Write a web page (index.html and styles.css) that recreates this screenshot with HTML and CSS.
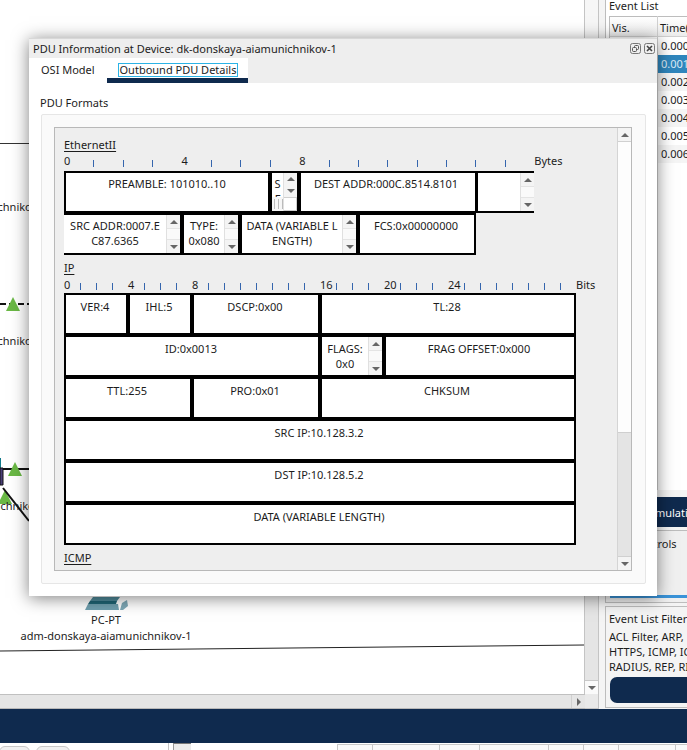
FILE: index.html
```html
<!DOCTYPE html>
<html lang="en">
<head>
<meta charset="utf-8">
<title>PDU Information at Device</title>
<link rel="stylesheet" href="styles.css">
</head>
<body>
<div class="app">
  <div class="main">
    <div class="work">
      <div class="canvas">
        <svg class="marks" width="584" height="694" viewBox="0 0 584 694">
          <path d="M0 143.5H30" stroke="#333" fill="none"/>
          <path d="M0 304H30" stroke="#111" stroke-width="2" stroke-dasharray="6 3" fill="none"/>
          <path d="M6 311L13 297L20 311Z" fill="#6ab845"/>
          <path d="M2 469H30" stroke="#111" stroke-width="2" fill="none"/>
          <path d="M0 458H1V468H0Z" fill="#117a8b"/>
          <path d="M0 468H3V485H0Z" fill="#4a3f78" stroke="#111"/>
          <path d="M8 476L15 462L22 476Z" fill="#6ab845"/>
          <path d="M-2 504L5 490L12 504Z" fill="#6ab845"/>
          <path d="M3 488L29 521" stroke="#111" stroke-width="2" fill="none"/>
          <path d="M0 651L584 645" stroke="#222" fill="none"/>
          <path d="M93 597H120L117 601H90Z" fill="#4f8a9a"/>
          <path d="M90 601H117L116 604H88Z" fill="#1f6474"/>
          <path d="M88 604H118L119 610H85Z" fill="#6f9fae"/>
          <path d="M122 603L127 600L128 606L123 610H120Z" fill="#7ea8b6"/>
        </svg>
        <span class="cut cut-a">adm-donskaya-aiamunichnikov-1</span>
        <span class="cut cut-b">adm-donskaya-aiamunichnikov-1</span>
        <span class="cut cut-c">adm-donskaya-aiamunichnikov-1</span>
        <div class="pc">
          <span>PC-PT</span>
          <span>adm-donskaya-aiamunichnikov-1</span>
        </div>
      </div>
      <div class="wscroll">
        <div class="wthumb"></div>
        <div class="wtrack"></div>
        <div class="wbtn"><b class="dn"></b></div>
      </div>
      <div class="hscroll">
        <div class="htrack"></div>
        <div class="hbtn"><b class="rt"></b></div>
      </div>
      <div class="corner"></div>
    </div>
    <aside class="side">
      <section class="p-events">
        <div class="p-title">Event List</div>
        <div class="ev-table">
          <div class="ev-vis">
            <div class="ev-head">Vis.</div>
          </div>
          <div class="ev-time">
            <div class="ev-head">Time(sec)</div>
            <div class="ev-row">0.000</div>
            <div class="ev-row ev-sel">0.001</div>
            <div class="ev-row ev-alt">0.002</div>
            <div class="ev-row">0.003</div>
            <div class="ev-row ev-alt">0.004</div>
            <div class="ev-row">0.005</div>
            <div class="ev-row ev-alt">0.006</div>
          </div>
        </div>
      </section>
      <div class="sim-btn">Simulation</div>
      <section class="p-play">
        <div class="p-title">Play Controls</div>
        <div class="play-bar"></div>
      </section>
      <section class="p-filter">
        <div class="p-title">Event List Filters</div>
        <div class="f-list">
          <div>ACL Filter, ARP,</div>
          <div>HTTPS, ICMP, ICMPv6</div>
          <div>RADIUS, REP, RIP</div>
        </div>
        <div class="f-btn"></div>
      </section>
    </aside>
  </div>
  <div class="navy"></div>
  <div class="foot">
    <div class="foot-tabs"><span class="ft ft-a"></span><span class="ft ft-b"></span></div>
    <div class="foot-grip"></div>
    <div class="foot-gap"></div>
    <div class="fh fh1"></div><div class="fh fh2"></div><div class="fh fh3"></div><div class="fh fh4"></div><div class="fh fh5"></div><div class="fh fh6"></div><div class="fh fh7"></div><div class="fh fh8"></div>
  </div>

  <div class="dialog">
    <header class="d-title">
      <span class="d-name">PDU Information at Device: dk-donskaya-aiamunichnikov-1</span>
      <svg class="d-ic" width="11" height="11" viewBox="0 0 11 11"><rect x=".5" y=".5" width="10" height="10" rx="2" fill="none" stroke="#777"/><rect x="4.5" y="2.5" width="4" height="4" rx="1" fill="none" stroke="#555"/><rect x="2.5" y="4.5" width="4" height="4" rx="1" fill="#eee" stroke="#555"/></svg>
      <svg class="d-ic" width="11" height="11" viewBox="0 0 11 11"><rect x=".5" y=".5" width="10" height="10" rx="2" fill="none" stroke="#777"/><path d="M3 3L8 8M8 3L3 8" stroke="#444" stroke-width="1.6" fill="none"/></svg>
    </header>
    <nav class="d-tabs">
      <div class="tab tab-osi">OSI Model</div>
      <div class="tab tab-out"><span class="focus">Outbound PDU Details</span></div>
    </nav>
    <div class="d-body">
      <div class="fmt-label">PDU Formats</div>
      <div class="group">
        <div class="scroll">
          <div class="view">
            <div class="h h-eth">EthernetII</div>
            <div class="ruler ruler-b">
              <span>0</span><span><i></i></span><span><i></i></span><span><i></i></span><span>4</span><span><i></i></span><span><i></i></span><span><i></i></span><span>8</span><span><i></i></span><span><i></i></span><span><i></i></span><span><i></i></span><span><i></i></span><span><i></i></span><span><i></i></span><em>Bytes</em>
            </div>
            <div class="eth">
              <div class="er er1">
                <div class="c c-pre">PREAMBLE: 101010..10</div>
                <div class="c c-sfd">
                  <div class="sfd-in">
                    <div class="sfd-t">S<br>F</div>
                    <div class="sfd-h"><u></u><u></u><u></u></div>
                  </div>
                  <div class="sb sb-sfd"><div class="sbb"><b class="up"></b></div><div class="sbb"><b class="dn"></b></div><div class="sb-corner"></div></div>
                </div>
                <div class="c c-dst">DEST ADDR:000C.8514.8101</div>
                <div class="c c-more">
                  <div class="sb-txt"></div>
                  <div class="sb"><div class="sbb"><b class="up"></b></div><div class="sbm"></div><div class="sbb"><b class="dn"></b></div></div>
                </div>
              </div>
              <div class="er er2">
                <div class="c c-src">
                  <div class="sb-txt">SRC ADDR:0007.E<br>C87.6365</div>
                  <div class="sb"><div class="sbb"><b class="up"></b></div><div class="sbm"></div><div class="sbb"><b class="dn"></b></div></div>
                </div>
                <div class="c c-typ">
                  <div class="sb-txt">TYPE:<br>0x080</div>
                  <div class="sb"><div class="sbb"><b class="up"></b></div><div class="sbm"></div><div class="sbb"><b class="dn"></b></div></div>
                </div>
                <div class="c c-dat">
                  <div class="sb-txt">DATA (VARIABLE L<br>ENGTH)</div>
                  <div class="sb"><div class="sbb"><b class="up"></b></div><div class="sbm"></div><div class="sbb"><b class="dn"></b></div></div>
                </div>
                <div class="c c-fcs">FCS:0x00000000</div>
              </div>
            </div>
            <div class="h h-ip">IP</div>
            <div class="ruler ruler-i">
              <span>0</span><span><i></i></span><span><i></i></span><span><i></i></span><span>4</span><span><i></i></span><span><i></i></span><span><i></i></span><span>8</span><span><i></i></span><span><i></i></span><span><i></i></span><span><i></i></span><span><i></i></span><span><i></i></span><span><i></i></span><span>16</span><span><i></i></span><span><i></i></span><span><i></i></span><span>20</span><span><i></i></span><span><i></i></span><span><i></i></span><span>24</span><span><i></i></span><span><i></i></span><span><i></i></span><span><i></i></span><span><i></i></span><span><i></i></span><span><i></i></span><em>Bits</em>
            </div>
            <div class="ip">
              <div class="q s1">VER:4</div>
              <div class="q s1">IHL:5</div>
              <div class="q s2">DSCP:0x00</div>
              <div class="q s4">TL:28</div>
              <div class="q s4">ID:0x0013</div>
              <div class="q s1 q-flags">
                <div class="sb-txt">FLAGS:<br>0x0</div>
                <div class="sb"><div class="sbb"><b class="up"></b></div><div class="sbm"></div><div class="sbb"><b class="dn"></b></div></div>
              </div>
              <div class="q s3">FRAG OFFSET:0x000</div>
              <div class="q s2">TTL:255</div>
              <div class="q s2">PRO:0x01</div>
              <div class="q s4">CHKSUM</div>
              <div class="q s8">SRC IP:10.128.3.2</div>
              <div class="q s8">DST IP:10.128.5.2</div>
              <div class="q s8">DATA (VARIABLE LENGTH)</div>
            </div>
            <div class="h h-icmp">ICMP</div>
          </div>
          <div class="vb">
            <div class="vbb"><b class="up"></b></div>
            <div class="vb-thumb"></div>
            <div class="vb-track"></div>
            <div class="vbb vbb-d"><b class="dn"></b></div>
          </div>
        </div>
      </div>
    </div>
  </div>
</div>
</body>
</html>
```
FILE: styles.css
```css
* { box-sizing: border-box; }
html, body { margin: 0; padding: 0; }
body { font-family: "Noto Sans", "Open Sans", sans-serif; font-size: 11px; line-height: 15px; color: #1c1c1c; background: #fff; }
.app { position: relative; width: 687px; height: 750px; overflow: hidden; display: flex; flex-direction: column; }
.main { display: flex; height: 709px; flex: none; }

/* workspace */
.work { width: 599px; flex: none; display: grid; grid-template-columns: 585px 14px; grid-template-rows: 694px 15px; }
.canvas { position: relative; background: #fff; overflow: hidden; border-right: 1px solid #c4c4c4; }
.marks { position: absolute; left: 0; top: 0; }
.cut { position: absolute; white-space: nowrap; }
.cut-a { left: -124px; top: 199px; }
.cut-b { left: -124px; top: 333px; }
.cut-c { left: -121px; top: 498px; }
.pc { position: absolute; left: 21px; top: 612px; width: 170px; display: flex; flex-direction: column; align-items: center; gap: 1px; white-space: nowrap; }
.wscroll { display: flex; flex-direction: column; border-right: 1px solid #c4c4c4; }
.wthumb { height: 100px; background: #f6f6f6; }
.wtrack { flex: 1; background: #e5e5e5; }
.wbtn { height: 14px; background: #fafafa; border-top: 1px solid #c8c8c8; display: flex; align-items: center; justify-content: center; }
.hscroll { display: flex; background: #e5e5e5; border-top: 1px solid #c0c0c0; border-bottom: 1px solid #b8b8b8; }
.htrack { flex: 1; }
.hbtn { width: 14px; border-left: 1px solid #d0d0d0; display: flex; align-items: center; justify-content: center; }
.corner { background: #e9e9e9; border: 1px solid #c4c4c4; border-left: 0; border-top: 0; }

/* arrows */
.up, .dn, .rt { display: block; width: 0; height: 0; }
.up { border-left: 4px solid transparent; border-right: 4px solid transparent; border-bottom: 4px solid #666; }
.dn { border-left: 4px solid transparent; border-right: 4px solid transparent; border-top: 4px solid #666; }
.rt { border-top: 4px solid transparent; border-bottom: 4px solid transparent; border-left: 4px solid #666; }

/* right panel */
.side { flex: 1; min-width: 0; padding-left: 6px; display: flex; flex-direction: column; background: #f4f4f4; }
.p-title { white-space: nowrap; }
.p-events { height: 490px; border-left: 1px solid #bdbdbd; padding: 0 0 0 3px; background: #fff; overflow: hidden; }
.p-events .p-title { height: 16px; line-height: 12px; }
.ev-table { display: flex; border-left: 1px solid #bdbdbd; height: 474px; }
.ev-vis { width: 48px; flex: none; border-right: 1px solid #d0d0d0; }
.ev-time { flex: 1; min-width: 0; white-space: nowrap; overflow: hidden; }
.ev-head { height: 21px; line-height: 21px; padding-left: 2px; border-top: 1px solid #bdbdbd; border-bottom: 1px solid #d0d0d0; background: linear-gradient(#fff, #ececec); }
.ev-row { height: 18px; line-height: 18px; padding-left: 3px; background: #fff; }
.ev-alt { background: #f5f5f5; }
.ev-sel { background: #2f86bd; color: #dceaf5; }
.sim-btn { height: 30px; margin: 7px 0 0 5px; padding-left: 36px; line-height: 31px; background: #0f2a4e; color: #fff; white-space: nowrap; overflow: hidden; border-radius: 6px 0 0 6px; }
.p-play { height: 73px; margin-top: 3px; border: 1px solid #bdbdbd; border-right: 0; padding: 5px 0 0 3px; position: relative; background: #f0f0f0; }
.play-bar { position: absolute; left: 4px; right: 0; bottom: 4px; height: 3px; background: #3a93d8; }
.p-filter { height: 102px; margin-top: 3px; border: 1px solid #bdbdbd; border-right: 0; padding: 4px 0 0 3px; background: #f4f4f4; white-space: nowrap; overflow: hidden; }
.f-list { margin-top: 3px; }
.f-btn { height: 26px; margin: 3px 0 0 1px; background: #0f2a4e; border-radius: 7px 0 0 7px; }

/* bottom */
.navy { height: 34px; flex: none; background: #0f2a4e; }
.foot { flex: 1; display: flex; background: #fff; overflow: hidden; }
.foot-tabs { width: 169px; flex: none; border-right: 1px solid #c4c4c4; display: flex; gap: 6px; padding-top: 3px; }
.ft { width: 31px; height: 10px; border: 1px solid #c8c8c8; border-radius: 6px 6px 0 0; background: #f0f0f0; margin-left: -1px; }
.ft-b { width: 34px; margin-left: 0; }
.foot-grip { width: 18px; flex: none; margin-left: 4px; background: #ececec; border-top: 1px solid #777; border-left: 1px solid #999; }
.foot-gap { width: 146px; flex: none; }
.fh { flex: none; height: 10px; margin-top: 1px; border-top: 1px solid #c8c8c8; border-left: 1px solid #c8c8c8; background: #fafafa; }
.fh1 { width: 35px; } .fh2 { width: 67px; } .fh3 { width: 40px; } .fh4 { width: 69px; }
.fh5 { width: 35px; } .fh6 { width: 35px; } .fh7 { width: 57px; } .fh8 { width: 20px; }

/* dialog */
.dialog { position: absolute; left: 29px; top: 38px; width: 628px; height: 558px; background: #fff; display: flex; flex-direction: column; box-shadow: 0 2px 16px rgba(0, 0, 0, .5); border-top: 1px solid #d8d8d8; }
.d-title { height: 19px; flex: none; background: #eee; display: flex; align-items: center; gap: 3px; padding: 0 2px 0 4px; }
.d-name { flex: 1; white-space: nowrap; line-height: 14px; }
.d-ic { flex: none; }
.d-tabs { height: 25px; flex: none; display: flex; background: #eee; }
.tab { flex: none; }
.tab-osi { width: 78px; background: #fff; padding: 4px 0 0 12px; }
.tab-out { width: 141px; background: #fff; border-bottom: 5px solid #0f2a4e; padding: 5px 0 0 11px; }
.focus { display: block; width: 120px; height: 14px; line-height: 12px; border: 1px solid #2bb3e6; text-align: center; white-space: nowrap; margin-top: 0; }
.d-body { flex: 1; background: #fff; padding: 12px 11px 12px 11px; min-height: 0; }
.fmt-label { height: 19px; line-height: 15px; }
.group { height: 470px; margin-left: 1px; background: #fafafa; border: 1px solid #e6e6e6; border-radius: 2px; padding: 12px 13px 12px 12px; }
.scroll { height: 444px; display: flex; background: #eee; border: 1px solid #b8b8b8; }
.view { flex: 1; min-width: 0; padding-left: 9px; overflow: hidden; }

.h { height: 18px; line-height: 18px; text-decoration: underline; text-decoration-thickness: 1px; text-underline-offset: 2px; }
.h-eth { margin-top: 8px; }
.h-ip { margin-top: 4px; }
.h-icmp { margin-top: 4px; }
.ruler { display: flex; white-space: nowrap; }
.ruler span { flex: none; display: block; }
.ruler i { display: block; width: 1px; height: 7px; margin-top: 6px; background: #3565ad; }
.ruler em { font-style: normal; flex: none; }
.ruler-b { height: 17px; line-height: 14px; }
.ruler-b span { width: 29.4px; }
.ruler-i { height: 16px; line-height: 15px; }
.ruler-i span { width: 16px; }

/* ethernet frame */
.eth { width: 470px; }
.er { display: flex; background: #000; }
.er1 { height: 42px; padding: 2px 0 2px 2px; }
.er2 { height: 42px; padding: 2px 0 2px 0; width: 412px; }
.c { background: #fff; text-align: center; display: flex; flex: none; overflow: hidden; }
.c-pre { width: 202px; margin-right: 4px; padding-top: 3px; justify-content: center; }
.c-sfd { width: 25px; margin-right: 4px; }
.c-dst { width: 174px; margin-right: 3px; padding: 3px 4px 0 0; justify-content: center; }
.c-more { width: 56px; }
.c-src { width: 116px; margin-right: 4px; }
.c-typ { width: 54px; margin-right: 4px; }
.c-dat { width: 114px; margin-right: 4px; }
.c-fcs { width: 114px; margin-right: 2px; padding: 3px 2px 0 0; justify-content: center; }
.sb-txt { flex: 1; min-width: 0; padding-top: 3px; text-align: center; white-space: nowrap; overflow: hidden; }
.sb { width: 14px; flex: none; display: flex; flex-direction: column; background: #fafafa; border-left: 1px solid #e0e0e0; }
.sbb { height: 13px; flex: none; display: flex; align-items: center; justify-content: center; background: #f4f4f4; }
.sbm { flex: 1; background: #fafafa; border-top: 1px solid #e4e4e4; border-bottom: 1px solid #e4e4e4; }
.sfd-in { width: 11px; flex: none; display: flex; flex-direction: column; }
.sfd-t { height: 24px; overflow: hidden; padding-top: 3px; }
.sfd-h { flex: 1; display: flex; gap: 3px; padding: 2px 0 2px 2px; background: #f6f6f6; }
.sfd-h u { display: block; width: 1px; background: #bbb; }
.sb-sfd .sbb { height: 12px; }
.sb-corner { flex: 1; margin-top: 0; background: #fff; border: 1px solid #cfcfcf; border-left: 0; }

/* ip packet */
.ip { width: 512px; display: grid; grid-template-columns: repeat(8, 60px); grid-auto-rows: 38px; gap: 4px; padding: 2px; background: #000; }
.q { background: #fff; text-align: center; padding: 4px 2px 0 0; overflow: hidden; }
.s1 { grid-column: span 1; } .s2 { grid-column: span 2; } .s3 { grid-column: span 3; } .s4 { grid-column: span 4; } .s8 { grid-column: span 8; }
.q-flags { display: flex; padding: 0; }
.q-flags .sb-txt { padding-top: 4px; }

/* main scrollbar */
.vb { width: 14px; flex: none; display: flex; flex-direction: column; border-left: 1px solid #d4d4d4; }
.vbb { height: 14px; flex: none; background: #f4f4f4; display: flex; align-items: center; justify-content: center; border-bottom: 1px solid #d0d0d0; }
.vbb-d { border-bottom: 0; border-top: 1px solid #d0d0d0; }
.vb-thumb { height: 291px; flex: none; background: #fdfdfd; border-bottom: 1px solid #cfcfcf; }
.vb-track { flex: 1; background: #e4e4e4; }
```
